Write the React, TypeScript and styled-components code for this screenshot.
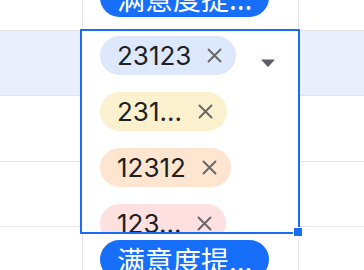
import React from "react";
import styled, { createGlobalStyle } from "styled-components";

const GlobalStyle = createGlobalStyle`
  html, body { margin: 0; padding: 0; background: #ffffff; }
  body {
    overflow: hidden;
    font-family: Inter, "Noto Sans CJK SC", "Noto Sans", sans-serif;
  }
`;

const Viewport = styled.div`
  position: relative;
  width: 364px;
  height: 270px;
  overflow: hidden;
  background: #ffffff;
`;

const Table = styled.div`
  display: flex;
  flex-direction: column;
  margin-top: -35px;
`;

const Row = styled.div<{ $active?: boolean }>`
  display: grid;
  grid-template-columns: 83px 216px 1fr;
  height: 64.5px;
  border-bottom: 1px solid #e3e4e7;
  background: ${(p) => (p.$active ? "#e9effd" : "#ffffff")};
`;

const Cell = styled.div<{ $last?: boolean }>`
  border-right: ${(p) => (p.$last ? "none" : "1px solid #e3e4e7")};
  padding: 13px 0 0 17px;
  overflow: hidden;
`;

const StatusPill = styled.span`
  display: inline-flex;
  align-items: center;
  height: 39px;
  padding: 0 17px 0 17px;
  border-radius: 20px;
  background: #176ef8;
  color: #ffffff;
  font-family: "Noto Sans CJK SC", Inter, sans-serif;
  font-size: 28px;
  font-weight: 400;
  line-height: 1;
  white-space: nowrap;
`;

const Editor = styled.div`
  position: absolute;
  left: 80px;
  top: 29px;
  width: 220px;
  height: 205px;
  box-sizing: border-box;
  border: 2px solid #1a6cf6;
  background: #ffffff;
`;

const EditorBody = styled.div`
  display: flex;
  height: 100%;
  overflow: hidden;
`;

const TagList = styled.div`
  flex: 1;
  display: flex;
  flex-direction: column;
  align-items: flex-start;
  gap: 17px;
  padding: 5px 0 0 18px;
`;

const tagColors: Record<string, string> = {
  blue: "#dee8fc",
  yellow: "#fbf1cf",
  orange: "#fde5cf",
  pink: "#fde0df",
};

const Tag = styled.span<{ $tone: string }>`
  display: inline-flex;
  align-items: center;
  flex-shrink: 0;
  gap: 16px;
  height: 39px;
  padding: 0 14px 0 17px;
  border-radius: 20px;
  background: ${(p) => tagColors[p.$tone]};
  color: #1f1f1f;
  font-size: 26px;
  font-weight: 400;
  line-height: 1;
  white-space: nowrap;
`;

const CloseIcon = styled.svg`
  width: 15px;
  height: 15px;
  flex-shrink: 0;
  color: #666666;
`;

const CaretBox = styled.div`
  padding: 28px 23px 0 0;
`;

const Caret = styled.svg`
  display: block;
  width: 14px;
  height: 8px;
  color: #5b5e63;
`;

const Handle = styled.div`
  position: absolute;
  right: -4px;
  bottom: -4px;
  width: 8px;
  height: 8px;
  background: #1a6cf6;
  outline: 1px solid #ffffff;
`;

const Close = () => (
  <CloseIcon viewBox="0 0 15 15" fill="none">
    <path d="M1.5 1.5 L13.5 13.5 M13.5 1.5 L1.5 13.5" stroke="currentColor" strokeWidth="1.9" strokeLinecap="round" />
  </CloseIcon>
);

const tags = [
  { label: "23123", tone: "blue" },
  { label: "231...", tone: "yellow" },
  { label: "12312", tone: "orange" },
  { label: "123...", tone: "pink" },
];

export default function App() {
  return (
    <Viewport>
      <GlobalStyle />
      <Table>
        <Row>
          <Cell />
          <Cell>
            <StatusPill>满意度提...</StatusPill>
          </Cell>
          <Cell $last />
        </Row>
        <Row $active>
          <Cell />
          <Cell />
          <Cell $last />
        </Row>
        <Row>
          <Cell />
          <Cell />
          <Cell $last />
        </Row>
        <Row>
          <Cell />
          <Cell />
          <Cell $last />
        </Row>
        <Row>
          <Cell />
          <Cell>
            <StatusPill>满意度提...</StatusPill>
          </Cell>
          <Cell $last />
        </Row>
      </Table>
      <Editor>
        <EditorBody>
          <TagList>
            {tags.map((t) => (
              <Tag key={t.label + t.tone} $tone={t.tone}>
                {t.label}
                <Close />
              </Tag>
            ))}
          </TagList>
          <CaretBox>
            <Caret viewBox="0 0 14 8">
              <path d="M0.8 0.6 H13.2 Q13.8 0.6 13.3 1.2 L7.6 7.4 Q7 8 6.4 7.4 L0.7 1.2 Q0.2 0.6 0.8 0.6 Z" fill="currentColor" />
            </Caret>
          </CaretBox>
        </EditorBody>
        <Handle />
      </Editor>
    </Viewport>
  );
}
